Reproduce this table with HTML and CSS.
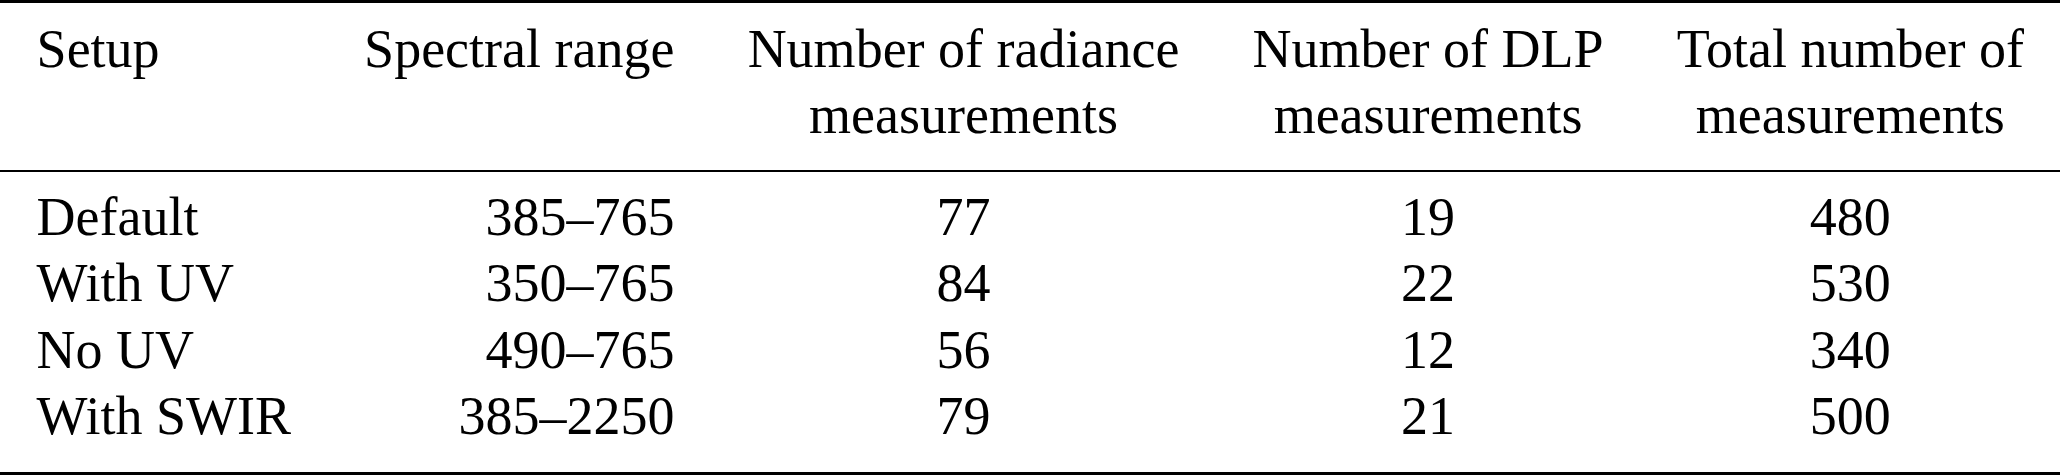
FILE: index.html
```html
<!DOCTYPE html>
<html lang="en">
<head>
  <meta charset="UTF-8" />
  <title>Measurement setups</title>
  <link rel="stylesheet" href="styles.css">
</head>

<body>
  <!-- Booktabs-style table -->
  <table class="setup-table">
    <thead>
      <tr>
        <th class="col-left">Setup</th>
        <th class="col-right">Spectral range</th>
        <th>Number of radiance<br/>measurements</th>
        <th>Number of DLP<br/>measurements</th>
        <th>Total number of<br/>measurements</th>
      </tr>
    </thead>
    <tbody>
      <tr class="first-row">
        <td class="col-left">Default</td>
        <td class="col-right">385–765</td>
        <td>77</td>
        <td>19</td>
        <td>480</td>
      </tr>
      <tr>
        <td class="col-left">With UV</td>
        <td class="col-right">350–765</td>
        <td>84</td>
        <td>22</td>
        <td>530</td>
      </tr>
      <tr>
        <td class="col-left">No UV</td>
        <td class="col-right">490–765</td>
        <td>56</td>
        <td>12</td>
        <td>340</td>
      </tr>
      <tr class="last-row">
        <td class="col-left">With SWIR</td>
        <td class="col-right">385–2250</td>
        <td>79</td>
        <td>21</td>
        <td>500</td>
      </tr>
    </tbody>
  </table>
</body>
</html>
```

FILE: styles.css
```css
/* Basic reset */
* {
  margin: 0;
  padding: 0;
  box-sizing: content-box;
}

html,
body {
  height: 475px;
  overflow: hidden;
}

body {
  background-color: #ffffff;
  color: #000000;
  font-family: "Liberation Serif", "Times New Roman", serif;
}

/* Table with top / mid / bottom rules */
.setup-table {
  border-collapse: separate;
  border-spacing: 0;
  font-size: 54px;
  line-height: 66.5px;
}

.setup-table th,
.setup-table td {
  padding: 0 36.6px;
  text-align: center;
  vertical-align: top;
  white-space: nowrap;
}

.setup-table th {
  font-weight: normal;
  padding-top: 12.5px;
  padding-bottom: 21.5px;
  border-top: 3px solid #000;
  border-bottom: 2px solid #000;
}

.setup-table .col-left {
  text-align: left;
}

.setup-table .col-right {
  text-align: right;
}

.first-row td {
  padding-top: 11.5px;
}

.last-row td {
  padding-bottom: 22px;
  border-bottom: 3px solid #000;
}
```
